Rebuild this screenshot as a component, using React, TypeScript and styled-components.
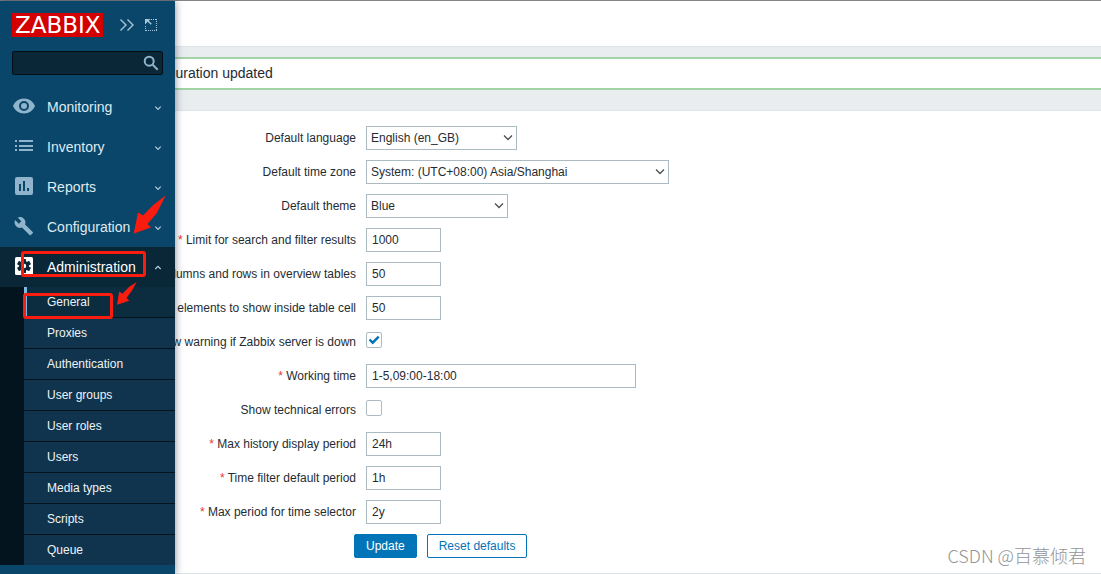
import React from "react";
import styled, { createGlobalStyle, css } from "styled-components";

const GlobalStyle = createGlobalStyle`
  * { box-sizing: border-box; }
  html { background: #fff; }
  body {
    margin: 0;
    font-family: "Liberation Sans", Arial, sans-serif;
    font-size: 12px;
    line-height: 16px;
    color: #1f2c33;
  }
  button, input, select { font: inherit; color: inherit; margin: 0; }
`;

const Page = styled.div`
  position: relative;
  min-height: 100vh;
  background: #fff;
  border-top: 1px solid #828488;
`;

/* ---------- sidebar, opened over the page ---------- */

const Sidebar = styled.aside`
  position: absolute;
  inset: 0 auto 0 0;
  z-index: 2;
  width: 175px;
  display: flex;
  flex-direction: column;
  background: #0a466a;
  box-shadow: 0 0 8px rgba(0, 20, 40, 0.5);
`;

const Brand = styled.div`
  display: flex;
  align-items: center;
  padding: 12px 12px 0;
`;

const Logo = styled.a`
  width: 91px;
  height: 24px;
  padding-left: 3px;
  background: #d40000;
  color: #fff;
  font-family: "DejaVu Sans", sans-serif;
  font-size: 23px;
  line-height: 24px;
  text-decoration: none;
`;

const IconButton = styled.button<{ $gap: number }>`
  display: flex;
  margin-left: ${(p) => p.$gap}px;
  padding: 0;
  border: 0;
  background: none;
  color: #a9c6d8;
  cursor: pointer;
`;

const Search = styled.form`
  display: flex;
  align-items: center;
  height: 24px;
  margin: 14px 12px 12px;
  padding-right: 3px;
  background: #0a2738;
  border: 1px solid #030f17;
  border-radius: 2px;
`;

const SearchInput = styled.input`
  flex: 1;
  min-width: 0;
  padding: 0 6px;
  border: 0;
  outline: 0;
  background: none;
  color: #fff;
`;

const Menu = styled.nav`
  display: flex;
  flex-direction: column;
`;

const MenuItem = styled.a<{ $open?: boolean }>`
  display: grid;
  grid-template-columns: 24px 1fr 8px;
  column-gap: 11px;
  align-items: center;
  height: 40px;
  padding: 0 13px 0 12px;
  font-size: 14px;
  text-decoration: none;
  color: ${(p) => (p.$open ? "#fff" : "#dfeaf1")};
  background: ${(p) => (p.$open ? "#0a2738" : "none")};
`;

const MenuIcon = styled.svg<{ $open?: boolean }>`
  margin-bottom: 2px;
  color: ${(p) => (p.$open ? "#fff" : "#8fb4cc")};
`;

const SubMenu = styled.div`
  display: flex;
  flex-direction: column;
  gap: 1px;
  padding-left: 24px;
  background: #03141e;
`;

const SubItem = styled.a<{ $active?: boolean }>`
  height: 30px;
  padding-left: 23px;
  line-height: 30px;
  text-decoration: none;
  color: #eef3f6;
  background: #10344d;
  ${(p) =>
    p.$active &&
    css`
      padding-left: 20px;
      border-left: 3px solid #7cb8e0;
      background: #0c2c40;
    `}
`;

/* ---------- content ---------- */

const Header = styled.header`
  height: 46px;
  border-bottom: 1px solid #dfe4e7;
`;

const MessageBand = styled.div`
  padding: 10px 0 20px;
  background: #e9edf0;
  border-bottom: 1px solid #dfe4e7;
`;

const Message = styled.output`
  display: block;
  height: 33px;
  padding-left: 135px;
  border-top: 2px solid #a3d4a5;
  border-bottom: 2px solid #a3d4a5;
  background: #fff;
  font-size: 14px;
  line-height: 28px;
`;

const Form = styled.form`
  display: flex;
  flex-direction: column;
  gap: 10px;
  padding: 15px 10px;
  border-bottom: 1px solid #dfe4e7;
`;

const Row = styled.div`
  display: grid;
  grid-template-columns: 356px 1fr;
  column-gap: 10px;
  height: 24px;
  margin-left: -10px;
`;

const Label = styled.label<{ $required?: boolean }>`
  text-align: right;
  line-height: 24px;
  white-space: nowrap;
  ${(p) =>
    p.$required &&
    css`
      &::before {
        content: "* ";
        color: #e33734;
      }
    `}
`;

const TextInput = styled.input<{ $wide?: boolean }>`
  width: ${(p) => (p.$wide ? 270 : 75)}px;
  height: 24px;
  padding: 0 5px;
  border: 1px solid #acbbc2;
  background: #fff;
`;

const SelectBox = styled.div<{ $width: number }>`
  display: grid;
  grid-template-columns: 1fr 14px;
  align-items: center;
  width: ${(p) => p.$width}px;
  height: 24px;

  svg {
    grid-area: 1 / 2;
    pointer-events: none;
  }
`;

const Select = styled.select`
  grid-area: 1 / 1 / 2 / 3;
  appearance: none;
  height: 24px;
  padding: 0 18px 0 4px;
  border: 1px solid #acbbc2;
  border-radius: 0;
  background: #fff;
`;

const CheckBox = styled.div`
  display: grid;
  width: 16px;
  height: 16px;
  margin-top: 2px;

  svg {
    grid-area: 1 / 1;
    pointer-events: none;
    visibility: hidden;
  }
  input:checked + svg {
    visibility: visible;
  }
`;

const CheckInput = styled.input`
  grid-area: 1 / 1;
  appearance: none;
  width: 16px;
  height: 16px;
  border: 1px solid #acbbc2;
  border-radius: 2px;
  background: #fff;
`;

const Actions = styled.div`
  display: flex;
  gap: 10px;
  padding-left: 344px;
`;

const Button = styled.button<{ $primary?: boolean }>`
  height: 24px;
  padding: 0 11px;
  border: 1px solid #0275b8;
  border-radius: 2px;
  background: ${(p) => (p.$primary ? "#0275b8" : "#fff")};
  color: ${(p) => (p.$primary ? "#fff" : "#0275b8")};
  cursor: pointer;
`;

/* ---------- marks laid over the page ---------- */

const Marks = styled.svg`
  position: absolute;
  top: -1px;
  left: 0;
  z-index: 3;
  pointer-events: none;
`;

const Watermark = styled.span`
  position: absolute;
  right: 15px;
  bottom: 7px;
  font-family: "Noto Sans CJK SC", sans-serif;
  font-size: 18px;
  font-weight: 300;
  line-height: 24px;
  color: #939598;
`;

type IconName = "eye" | "list" | "chart" | "wrench" | "gear";

const icons: Record<IconName, React.ReactNode> = {
  eye: (
    <path
      fillRule="evenodd"
      d="M12 4.5C7 4.5 2.7 7.600 1 12c1.700 4.400 6 7.500 11 7.500s9.300-3.100 11-7.500c-1.700-4.400-6-7.500-11-7.500zM12 17a5 5 0 1 1 0-10 5 5 0 0 1 0 10zm0-8a3 3 0 1 0 0 6 3 3 0 0 0 0-6z"
    />
  ),
  list: (
    <path d="M3 6h2v2H3zM7 6h14v2H7zM3 11h2v2H3zM7 11h14v2H7zM3 15h2v2H3zM7 15h14v2H7z" />
  ),
  chart: (
    <path
      fillRule="evenodd"
      d="M5 3h14a2 2 0 0 1 2 2v14a2 2 0 0 1-2 2H5a2 2 0 0 1-2-2V5a2 2 0 0 1 2-2zM7 10v7h2v-7zM11 7v10h2V7zM15 14v3h2v-3z"
    />
  ),
  wrench: (
    <path d="M20.700 18.100l-7.600-7.600c.8-1.900.4-4.200-1.200-5.800-1.700-1.700-4.200-2-6.200-1.100l3.600 3.600-2.500 2.500-3.700-3.600c-1 2-.6 4.500 1.100 6.200 1.600 1.600 3.900 2 5.800 1.200l7.600 7.600c.3.3.9.3 1.200 0l1.900-1.900c.4-.3.4-.8 0-1.100z" />
  ),
  gear: (
    <>
      <rect x="3" y="3" width="18" height="18" rx="1.500" />
      <g fill="#0a2738">
        <circle cx="12" cy="12" r="5" />
        {[0, 60, 120].map((angle) => (
          <rect
            key={angle}
            x="10"
            y="5"
            width="4"
            height="14"
            rx=".6"
            transform={`rotate(${angle} 12 12)`}
          />
        ))}
      </g>
      <circle cx="12" cy="12" r="2.200" />
    </>
  ),
};

const menu: { label: string; icon: IconName; open?: boolean }[] = [
  { label: "Monitoring", icon: "eye" },
  { label: "Inventory", icon: "list" },
  { label: "Reports", icon: "chart" },
  { label: "Configuration", icon: "wrench" },
  { label: "Administration", icon: "gear", open: true },
];

const subMenu = [
  "General",
  "Proxies",
  "Authentication",
  "User groups",
  "User roles",
  "Users",
  "Media types",
  "Scripts",
  "Queue",
];

type Field = {
  id: string;
  label: string;
  kind: "select" | "text" | "check";
  value?: string;
  width?: number;
  wide?: boolean;
  required?: boolean;
  checked?: boolean;
};

const fields: Field[] = [
  { id: "lang", label: "Default language", kind: "select", value: "English (en_GB)", width: 151 },
  { id: "tz", label: "Default time zone", kind: "select", value: "System: (UTC+08:00) Asia/Shanghai", width: 303 },
  { id: "theme", label: "Default theme", kind: "select", value: "Blue", width: 142 },
  { id: "limit", label: "Limit for search and filter results", kind: "text", value: "1000", required: true },
  { id: "overview", label: "Columns and rows in overview tables", kind: "text", value: "50", required: true },
  { id: "cell", label: "Max elements to show inside table cell", kind: "text", value: "50", required: true },
  { id: "down", label: "Show warning if Zabbix server is down", kind: "check", checked: true },
  { id: "work", label: "Working time", kind: "text", value: "1-5,09:00-18:00", wide: true, required: true },
  { id: "errors", label: "Show technical errors", kind: "check" },
  { id: "history", label: "Max history display period", kind: "text", value: "24h", required: true },
  { id: "filter", label: "Time filter default period", kind: "text", value: "1h", required: true },
  { id: "period", label: "Max period for time selector", kind: "text", value: "2y", required: true },
];

function Control({ field }: { field: Field }) {
  if (field.kind === "select") {
    return (
      <SelectBox $width={field.width ?? 150}>
        <Select id={field.id}>
          <option>{field.value}</option>
        </Select>
        <svg width="10" height="8" viewBox="0 0 10 8" fill="none" stroke="#4a5054" strokeWidth="1.300">
          <path d="M1 1.500l4 4 4-4" />
        </svg>
      </SelectBox>
    );
  }
  if (field.kind === "check") {
    return (
      <CheckBox>
        <CheckInput id={field.id} type="checkbox" defaultChecked={field.checked} />
        <svg width="16" height="16" viewBox="0 0 16 16" fill="none" stroke="#0275b8" strokeWidth="2.400">
          <path d="M3.500 7.500l3.200 3.200 6-6" />
        </svg>
      </CheckBox>
    );
  }
  return <TextInput id={field.id} type="text" defaultValue={field.value} $wide={field.wide} />;
}

export default function App() {
  return (
    <Page>
      <GlobalStyle />
      <Sidebar>
        <Brand>
          <Logo href="#">ZABBIX</Logo>
          <IconButton type="button" aria-label="Collapse sidebar" $gap={16}>
            <svg width="16" height="16" viewBox="0 0 16 16" fill="none" stroke="currentColor" strokeWidth="1.400">
              <path d="M1.500 2.500L7 8l-5.500 5.500M8.500 2.500L14 8l-5.500 5.500" />
            </svg>
          </IconButton>
          <IconButton type="button" aria-label="Hide sidebar" $gap={8}>
            <svg width="16" height="16" viewBox="0 0 16 16" fill="none" stroke="currentColor">
              <path d="M8 2.500h6M13.500 2v12M14 13.500H2M2.500 14V8" strokeDasharray="1 1" />
              <path d="M2 2h5.500L5.800 3.700l3 3-1.100 1.100-3-3L2 7.500z" fill="currentColor" stroke="none" />
            </svg>
          </IconButton>
        </Brand>
        <Search role="search">
          <SearchInput type="text" aria-label="Search" />
          <svg width="16" height="16" viewBox="0 0 16 16" fill="none" stroke="#8fb4cc" strokeWidth="2">
            <circle cx="6.200" cy="6.200" r="4.500" />
            <path d="M9.700 9.700l5 5" />
          </svg>
        </Search>
        <Menu>
          {menu.map((item) => (
            <MenuItem key={item.label} href="#" $open={item.open}>
              <MenuIcon width="24" height="24" viewBox="0 0 24 24" fill="currentColor" $open={item.open}>
                {icons[item.icon]}
              </MenuIcon>
              {item.label}
              <svg width="8" height="8" viewBox="0 0 8 8" fill="none" stroke="#b9cfdc" strokeWidth="1.200">
                <path d={item.open ? "M1.300 6L4 3.300l2.700 2.700" : "M1.300 3.700L4 6.400l2.700-2.700"} />
              </svg>
            </MenuItem>
          ))}
          <SubMenu>
            {subMenu.map((label) => (
              <SubItem key={label} href="#" $active={label === "General"}>
                {label}
              </SubItem>
            ))}
          </SubMenu>
        </Menu>
      </Sidebar>

      <main>
        <Header />
        <MessageBand>
          <Message>Configuration updated</Message>
        </MessageBand>
        <Form>
          {fields.map((field) => (
            <Row key={field.id}>
              <Label htmlFor={field.id} $required={field.required}>
                {field.label}
              </Label>
              <Control field={field} />
            </Row>
          ))}
          <Actions>
            <Button type="button" $primary>
              Update
            </Button>
            <Button type="button">Reset defaults</Button>
          </Actions>
        </Form>
      </main>

      <Marks width="180" height="330" viewBox="0 0 180 330" fill="none" aria-hidden="true">
        <rect x="22.500" y="252.500" width="122" height="23" rx="1.500" stroke="#fb1c10" strokeWidth="3" />
        <rect x="24.500" y="294.500" width="87" height="23" rx="1.500" stroke="#fb1c10" strokeWidth="3" />
        <path d="M133.700 233.500L138 212.500L143 215.500L153.300 205L165.700 195.500L156.700 213.300L147.500 224L151 227.500z" fill="#fb1c10" />
        <path d="M117 304.700L119.200 291.500L122.500 293.700L129 287L136.700 282L132 290.500L126.500 298L129.300 300.700z" fill="#fb1c10" />
      </Marks>
      <Watermark>CSDN @百慕倾君</Watermark>
    </Page>
  );
}
